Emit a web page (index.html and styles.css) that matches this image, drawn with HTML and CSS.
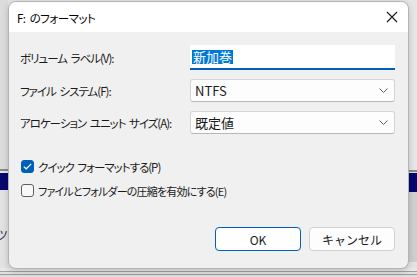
FILE: index.html
```html
<!DOCTYPE html>
<html lang="ja">
<head>
    <meta charset="UTF-8">
    <title>F: のフォーマット</title>
    <link rel="stylesheet" href="styles.css">
</head>
<body>
    <div class="desktop">
        <div class="behind-left"><span class="glyph">ツ</span></div>
        <div class="behind-right"></div>
        <div class="behind-bottom"></div>

        <div class="dialog">
            <div class="titlebar">
                <div class="title">F: のフォーマット</div>
                <svg class="close" width="12" height="12" viewBox="0 0 12 12">
                    <path d="M1 1 L11 11 M11 1 L1 11" stroke="#1a1a1a" stroke-width="1.1" fill="none"/>
                </svg>
            </div>

            <div class="body">
                <div class="field">
                    <label class="label">ボリューム ラベル(V):</label>
                    <div class="textbox"><span class="selected">新加巻</span></div>
                </div>
                <div class="field">
                    <label class="label">ファイル システム(F):</label>
                    <div class="combo">
                        <span>NTFS</span>
                        <svg class="chevron" width="9" height="5" viewBox="0 0 9 5">
                            <path d="M0.5 0.5 L4.5 4.5 L8.5 0.5" stroke="#5c5c5c" stroke-width="1" fill="none"/>
                        </svg>
                    </div>
                </div>
                <div class="field">
                    <label class="label">アロケーション ユニット サイズ(A):</label>
                    <div class="combo">
                        <span>既定値</span>
                        <svg class="chevron" width="9" height="5" viewBox="0 0 9 5">
                            <path d="M0.5 0.5 L4.5 4.5 L8.5 0.5" stroke="#5c5c5c" stroke-width="1" fill="none"/>
                        </svg>
                    </div>
                </div>

                <div class="options">
                    <div class="check">
                        <span class="box checked">
                            <svg width="9" height="7" viewBox="0 0 9 7">
                                <path d="M0.8 3.6 L3.2 5.8 L8.2 0.9" stroke="#fff" stroke-width="1.2" fill="none"/>
                            </svg>
                        </span>
                        <span class="jp">クイック フォーマットする(P)</span>
                    </div>
                    <div class="check">
                        <span class="box"></span>
                        <span class="jp tight">ファイルとフォルダーの圧縮を有効にする(E)</span>
                    </div>
                </div>

                <div class="buttons">
                    <button class="btn default">OK</button>
                    <button class="btn">キャンセル</button>
                </div>
            </div>
        </div>
    </div>
</body>
</html>
```

FILE: styles.css
```css
body {
    margin: 0;
    font-family: "Noto Sans CJK JP", "Noto Sans", sans-serif;
    font-size: 12px;
    color: #1a1a1a;
}

.desktop {
    position: relative;
    width: 417px;
    height: 277px;
    overflow: hidden;
    background: #e4e4e4;
}

/* window behind the dialog */
.behind-left {
    position: absolute;
    left: 0;
    top: 0;
    width: 8px;
    height: 277px;
    overflow: hidden;
    background:
        linear-gradient(to bottom,
            #dcdcdc 0, #dcdcdc 169px,
            #8a8a8a 169px, #8a8a8a 171px,
            #e6e6e6 171px, #e6e6e6 173px,
            #07076e 173px, #07076e 190px,
            #e2e2e2 190px);
}

.glyph {
    position: absolute;
    left: -4px;
    top: 226px;
    font-size: 12px;
    color: #303060;
}

.behind-right {
    position: absolute;
    right: 0;
    top: 0;
    width: 8px;
    height: 277px;
    background:
        linear-gradient(to bottom,
            #e6e6e6 0, #e6e6e6 170px,
            #8a8a8a 170px, #8a8a8a 172px,
            #e0e0e0 172px, #e0e0e0 173px,
            #07076e 173px, #07076e 192px,
            #cfcfcf 192px, #cfcfcf 262px,
            #e4e4e4 262px);
}

.behind-bottom {
    position: absolute;
    left: 0;
    bottom: 0;
    width: 417px;
    height: 9px;
    background: linear-gradient(to bottom,
        #e8e8e8 0, #e8e8e8 3px,
        #a0a0a0 3px, #a0a0a0 4px,
        #e0e0e0 4px, #e0e0e0 6px,
        #9a9a9a 6px, #9a9a9a 7px,
        #dedede 7px);
}

.dialog {
    position: absolute;
    left: 8px;
    top: 1px;
    width: 399px;
    height: 266px;
    border: 1px solid #b4b4b4;
    border-radius: 8px;
    background: #f0f0f0;
    box-shadow: 0 2px 6px rgba(0, 0, 0, 0.18);
    display: flex;
    flex-direction: column;
    overflow: hidden;
}

.titlebar {
    height: 30px;
    background: #ffffff;
    display: flex;
    align-items: center;
    justify-content: space-between;
    padding: 0 10px 0 8px;
    flex-shrink: 0;
}

.title {
    font-size: 11.5px;
    font-feature-settings: "palt";
    letter-spacing: -0.5px;
    word-spacing: 2px;
    color: #000;
    margin-top: 1px;
}

.body {
    flex: 1;
    display: flex;
    flex-direction: column;
    padding: 13px 13px 17px 11px;
}

.field {
    display: flex;
    align-items: center;
    margin-bottom: 9px;
}

.label,
.jp {
    font-size: 11.5px;
    font-feature-settings: "palt";
    letter-spacing: -1px;
    word-spacing: 2px;
    white-space: nowrap;
}

.jp.tight {
    font-size: 11px;
    letter-spacing: -0.8px;
}

.label {
    width: 170px;
    flex-shrink: 0;
}

.textbox {
    flex: 1;
    height: 23px;
    background: #ffffff;
    border-bottom: 2px solid #005fb8;
    display: flex;
    align-items: center;
    padding-left: 2px;
    font-size: 13px;
}

.selected {
    background: #0078d7;
    color: #ffffff;
    line-height: 14px;
    padding: 0 1px;
}

.combo {
    flex: 1;
    height: 21px;
    background: #fdfdfd;
    border: 1px solid #d4d4d4;
    border-bottom-color: #b8b8b8;
    border-radius: 3px;
    display: flex;
    align-items: center;
    justify-content: space-between;
    padding: 0 6px 0 4px;
    font-size: 13px;
}

.options {
    display: flex;
    flex-direction: column;
    gap: 11px;
    margin-top: 17px;
    padding-left: 1px;
}

.check {
    display: flex;
    align-items: center;
    gap: 4px;
    height: 13px;
}

.box {
    width: 11px;
    height: 11px;
    border: 1px solid #5e5e5e;
    border-radius: 3px;
    background: #f8f8f8;
    display: flex;
    align-items: center;
    justify-content: center;
}

.box.checked {
    background: #005fb8;
    border-color: #005fb8;
}

.buttons {
    margin-top: auto;
    display: flex;
    justify-content: flex-end;
    gap: 8px;
}

.btn {
    width: 86px;
    height: 24px;
    font-family: "Noto Sans CJK JP", "Noto Sans", sans-serif;
    font-size: 12px;
    color: #1a1a1a;
    background: #fdfdfd;
    border: 1px solid #d0d0d0;
    border-radius: 4px;
    padding: 0;
}

.btn.default {
    background: #ffffff;
    border-color: #005fb8;
}
```
